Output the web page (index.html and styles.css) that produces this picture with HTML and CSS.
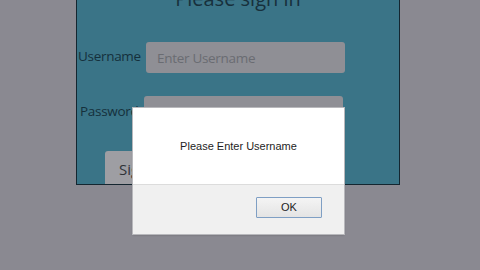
FILE: index.html
```html
<!DOCTYPE html>
<html>
<head>
<meta charset="utf-8">
<link rel="stylesheet" href="styles.css">
</head>
<body>
<div class="page">
  <div class="panel">
    <h1 class="title">Please sign in</h1>
    <div class="row row-user">
      <span class="label">Username</span>
      <div class="input"><span class="ph">Enter Username</span></div>
    </div>
    <div class="row row-pass">
      <span class="label label-pass">Password</span>
      <div class="input input-pass"><span class="ph">Enter Password</span></div>
    </div>
    <div class="btn-row">
      <div class="signin">Sign in</div>
    </div>
  </div>
  <div class="dialog">
    <div class="dialog-body">Please Enter Username</div>
    <div class="dialog-foot">
      <div class="ok">OK</div>
    </div>
  </div>
</div>
</body>
</html>
```
FILE: styles.css
```css
html, body {
  margin: 0;
  padding: 0;
}
body {
  width: 480px;
  height: 270px;
  overflow: hidden;
  background: #8a8991;
  font-family: "Open Sans", "Noto Sans", sans-serif;
}
.page {
  position: relative;
  width: 480px;
  height: 270px;
  overflow: hidden;
}
.panel {
  margin-left: 76px;
  margin-top: -16px;
  width: 322px;
  height: 199px;
  background: #3a7487;
  border: 1px solid #142630;
  box-sizing: content-box;
  display: flex;
  flex-direction: column;
}
.title {
  margin: 0;
  font-weight: normal;
  font-size: 20px;
  line-height: 28px;
  color: #17303c;
  text-align: center;
}
.row {
  display: flex;
  align-items: center;
  height: 31px;
}
.row-user {
  margin-top: 29px;
}
.row-pass {
  margin-top: 23px;
}
.label {
  font-size: 13.5px;
  letter-spacing: -0.3px;
  color: #15303c;
  width: 68px;
  margin-left: 1px;
  position: relative;
  top: -2px;
}
.label-pass {
  margin-left: 3px;
  width: 64px;
  top: -1px;
}
.input {
  width: 199px;
  height: 31px;
  background: #8f8f95;
  border-radius: 3px;
  display: flex;
  align-items: center;
  padding-left: 11px;
  box-sizing: border-box;
}
.ph {
  font-size: 13.5px;
  letter-spacing: -0.3px;
  color: #6a6c72;
}
.btn-row {
  margin-top: 24px;
  padding-left: 28px;
  flex: 1;
  display: flex;
}
.signin {
  width: 80px;
  background: #9e9ea3;
  border-radius: 3px 3px 0 0;
  font-size: 15px;
  color: #2e3338;
  padding: 8px 0 0 14px;
  box-sizing: border-box;
}
.dialog {
  position: absolute;
  left: 133px;
  top: 108px;
  width: 211px;
  height: 126px;
  background: #ffffff;
  box-shadow: 0 0 0 1px #b8b8bc, 0 1px 2px rgba(0,0,0,0.25);
  display: flex;
  flex-direction: column;
  font-family: "Liberation Sans", Arial, sans-serif;
}
.dialog-body {
  height: 77px;
  box-sizing: border-box;
  padding-top: 32px;
  text-align: center;
  font-size: 11px;
  color: #1e1e1e;
  border-bottom: 1px solid #dcdcdc;
}
.dialog-foot {
  flex: 1;
  background: #f0f0f0;
  display: flex;
  justify-content: flex-end;
  padding: 12px 22px 0 0;
  box-sizing: border-box;
}
.ok {
  width: 66px;
  height: 21px;
  box-sizing: border-box;
  border: 1px solid #7f9fc4;
  background: linear-gradient(#f4f4f4, #e4e4e4);
  font-size: 11px;
  color: #1e1e1e;
  text-align: center;
  line-height: 19px;
  border-radius: 1px;
}
```
